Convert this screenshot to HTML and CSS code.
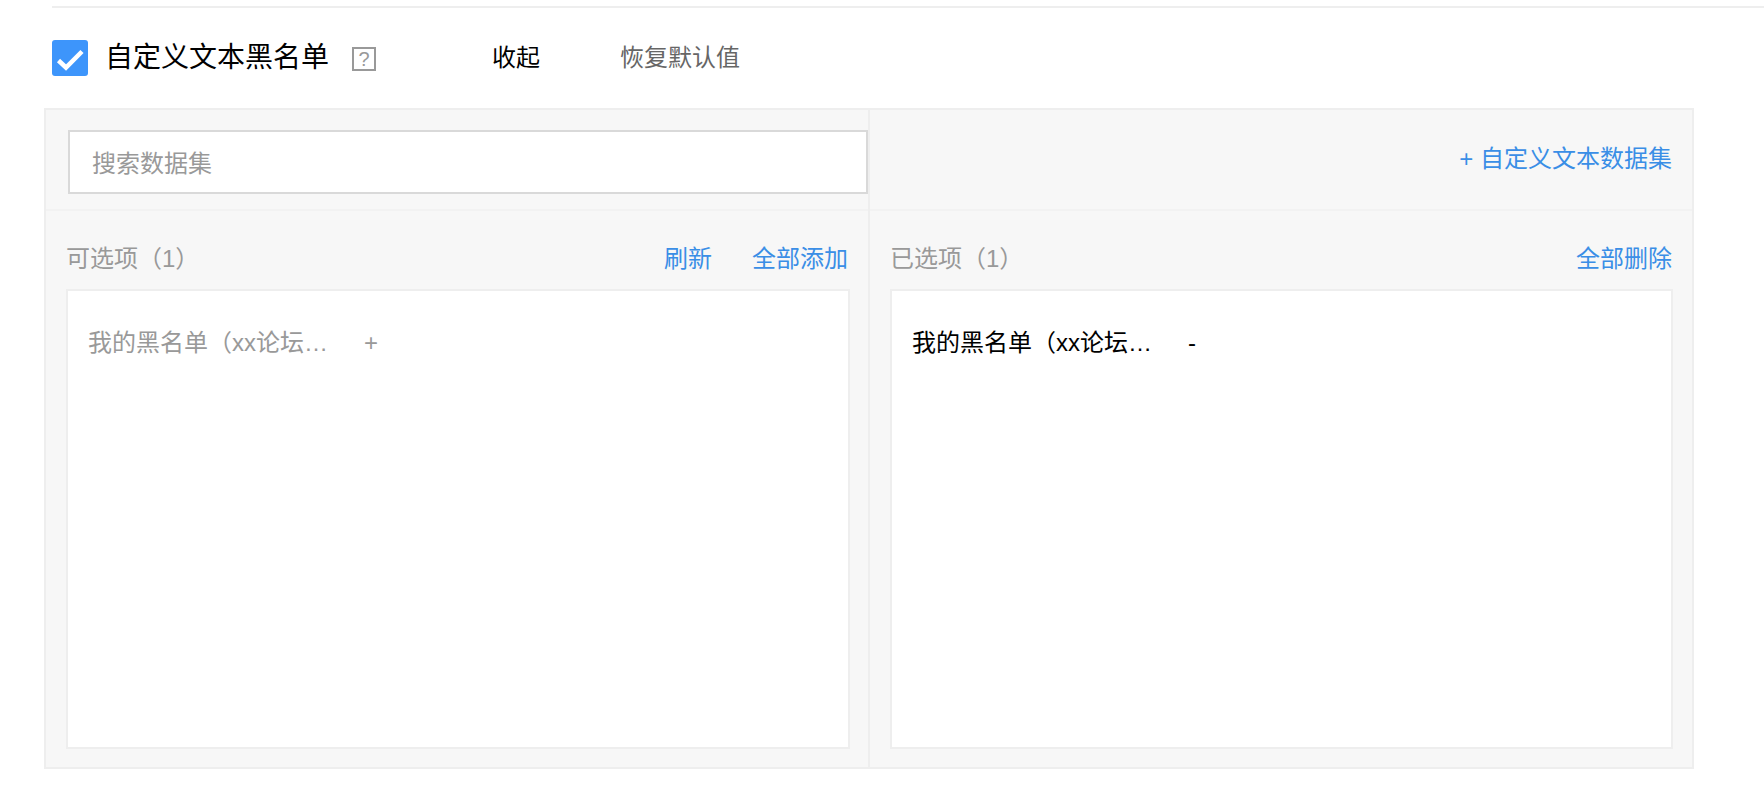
FILE: index.html
```html
<!DOCTYPE html>
<html lang="zh">
<head>
<meta charset="utf-8">
<title>自定义文本黑名单</title>
<link rel="stylesheet" href="styles.css">
</head>
<body>
<div class="page">
  <div class="topline"></div>
  <div class="header">
    <span class="check">
      <svg width="36" height="36" viewBox="0 0 36 36"><path d="M6.5 20.5 L14 27.5 L30 11.5" fill="none" stroke="#fff" stroke-width="4.5"/></svg>
    </span>
    <span class="title">自定义文本黑名单</span>
    <span class="help">?</span>
    <a class="collapse">收起</a>
    <a class="restore">恢复默认值</a>
  </div>
  <div class="panel">
    <div class="col col-left">
      <div class="toprow">
        <div class="search">搜索数据集</div>
      </div>
      <div class="body">
        <div class="bar">
          <span class="label">可选项（1）</span>
          <span class="actions"><a class="link">刷新</a><a class="link">全部添加</a></span>
        </div>
        <div class="list">
          <div class="item muted"><span class="name">我的黑名单（xx论坛…</span><span class="op">+</span></div>
        </div>
      </div>
    </div>
    <div class="col col-right">
      <div class="toprow toprow-right">
        <a class="link">+ 自定义文本数据集</a>
      </div>
      <div class="body">
        <div class="bar">
          <span class="label">已选项（1）</span>
          <span class="actions"><a class="link">全部删除</a></span>
        </div>
        <div class="list">
          <div class="item"><span class="name">我的黑名单（xx论坛…</span><span class="op">-</span></div>
        </div>
      </div>
    </div>
  </div>
</div>
</body>
</html>
```
FILE: styles.css
```css
* { box-sizing: border-box; }
html, body { margin: 0; padding: 0; background: #fff; }
body {
  width: 1764px;
  height: 798px;
  overflow: hidden;
  font-family: "Liberation Sans", "Noto Sans CJK SC", sans-serif;
  font-size: 24px;
  color: #000;
}
.page { padding-top: 6px; }
.topline { height: 2px; margin-left: 52px; background: #eee; }
.header {
  display: flex;
  align-items: center;
  height: 36px;
  margin: 32px 0 0 52px;
}
.check {
  display: block;
  width: 36px;
  height: 36px;
  border-radius: 3px;
  background: #3d95fb;
}
.check svg { display: block; }
.title {
  width: 220px;
  margin: 0 0 1px 17px;
  font-size: 28px;
  line-height: 36px;
  white-space: nowrap;
}
.help {
  display: flex;
  align-items: center;
  justify-content: center;
  width: 24px;
  height: 24px;
  margin: 2px 0 0 27px;
  border: 2px solid #999;
  color: #999;
  font-size: 20px;
  line-height: 1;
}
.collapse { margin: 0 0 6px 116px; }
.restore { margin: 0 0 6px 80px; color: #666; }
.panel {
  display: flex;
  width: 1650px;
  height: 661px;
  margin: 32px 0 0 44px;
  border: 2px solid #eee;
  background: #f7f7f7;
}
.col { display: flex; flex-direction: column; }
.col-left { width: 824px; border-right: 2px solid #eee; }
.col-right { flex: 1; }
.toprow {
  height: 101px;
  padding: 20px 0 0 22px;
  border-bottom: 2px solid #f2f2f2;
}
.toprow-right {
  display: flex;
  justify-content: flex-end;
  align-items: center;
  padding: 0 20px 6px 0;
}
.search {
  height: 64px;
  padding-left: 22px;
  border: 2px solid #d9d9d9;
  background: #fff;
  color: #999;
  line-height: 63px;
}
.body { flex: 1; display: flex; flex-direction: column; padding: 0 19px 18px 20px; }
.col-left .body { padding-left: 20px; padding-right: 18px; }
.bar {
  display: flex;
  justify-content: space-between;
  align-items: center;
  height: 78px;
  padding: 12px 1px 0 0;
}
.col-left .bar { padding-right: 2px; }
.label { color: #999; }
.actions { display: flex; gap: 40px; }
.link { color: #3a8ee6; white-space: nowrap; }
.list {
  flex: 1;
  padding: 34px 20px 0;
  border: 2px solid #eee;
  background: #fff;
}
.item { display: flex; line-height: 36px; }
.name { width: 276px; white-space: nowrap; }
.muted { color: #999; }
```
